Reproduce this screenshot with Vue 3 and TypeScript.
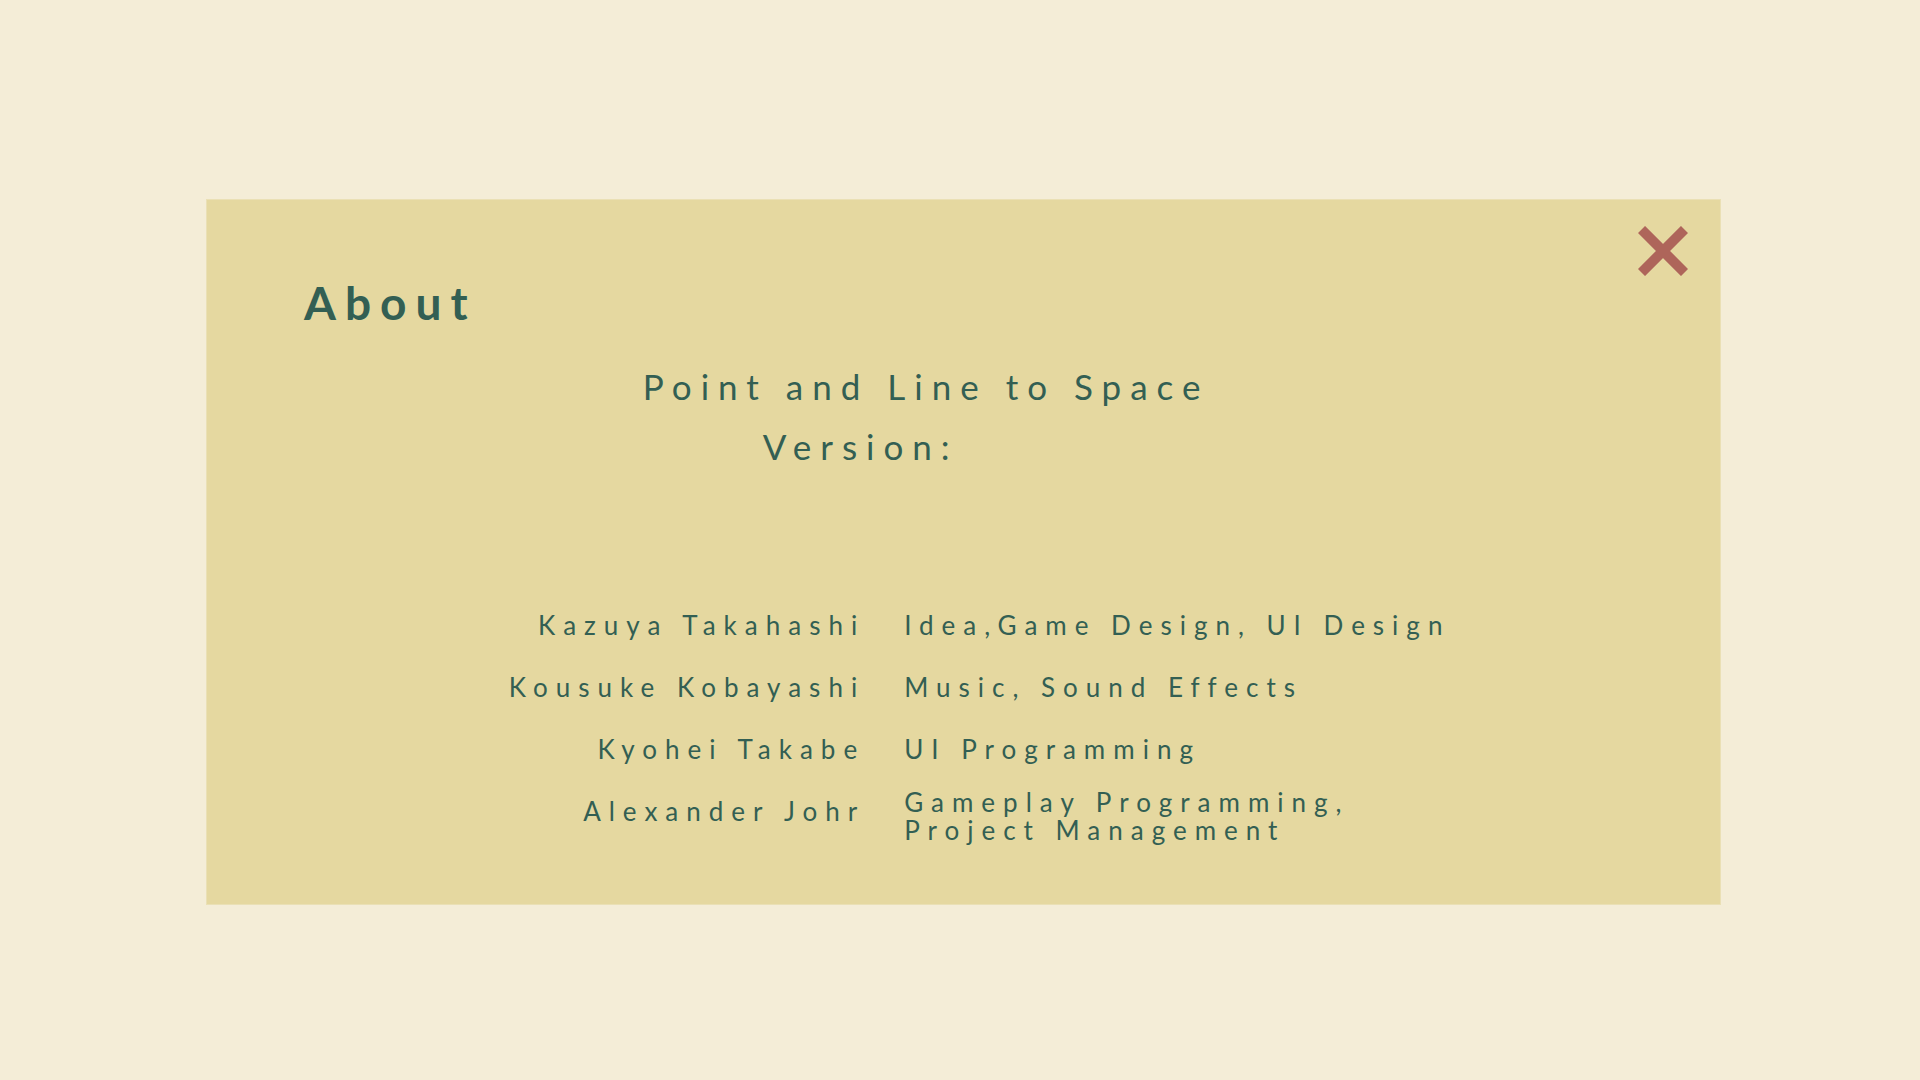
<script setup lang="ts">
import { ref } from 'vue'

interface Credit {
  name: string
  roles: string[]
}

const open = ref(true)

const credits: Credit[] = [
  { name: 'Kazuya Takahashi', roles: ['Idea,Game Design, UI Design'] },
  { name: 'Kousuke Kobayashi', roles: ['Music, Sound Effects'] },
  { name: 'Kyohei Takabe', roles: ['UI Programming'] },
  { name: 'Alexander Johr', roles: ['Gameplay Programming,', 'Project Management'] },
]
</script>

<template>
  <main class="page">
    <section v-if="open" class="panel" aria-labelledby="about-title">
      <header class="header">
        <h1 id="about-title" class="title">About</h1>
        <button class="close" type="button" aria-label="Close" @click="open = false">
          <svg viewBox="0 0 50 50" aria-hidden="true">
            <path d="M3.5 3.5 46.5 46.5M46.5 3.5 3.5 46.5" />
          </svg>
        </button>
      </header>

      <div class="product">
        <p class="product-name">Point and Line to Space</p>
        <p class="product-version">Version:</p>
      </div>

      <table class="credits">
        <tbody>
          <tr v-for="credit in credits" :key="credit.name">
            <th scope="row" class="name">{{ credit.name }}</th>
            <td class="roles" :class="{ multiline: credit.roles.length > 1 }">{{ credit.roles.join('\n') }}</td>
          </tr>
        </tbody>
      </table>
    </section>
  </main>
</template>

<style>
body {
  background: #f4edd7;
}
</style>

<style scoped>
.page {
  box-sizing: border-box;
  min-height: 100vh;
  padding: 199px 199px 100px 206px;
  background: #f4edd7;
  color: #335f53;
  font-family: Lato, "Open Sans", sans-serif;
}

.panel {
  padding-bottom: 60px;
  border: 1px solid #eae0b5;
  background: #e5d8a0;
}

.header {
  display: flex;
  justify-content: space-between;
  align-items: flex-start;
  padding: 0 32px 0 97px;
}

.title {
  margin: 75px 0 0;
  font-size: 46px;
  line-height: 56px;
  font-weight: 700;
  letter-spacing: 9px;
}

.close {
  width: 50px;
  height: 50px;
  margin-top: 26px;
  padding: 0;
  border: 0;
  background: none;
  cursor: pointer;
}

.close svg {
  display: block;
  width: 100%;
  height: 100%;
}

.close path {
  stroke: #ae655a;
  stroke-width: 10;
  fill: none;
}

.product {
  margin: 25px 0 118px;
  padding-left: 28.8%;
  font-size: 35px;
  line-height: 60px;
  letter-spacing: 9px;
}

.product p {
  margin: 0;
}

.product .product-version {
  margin-left: 120px;
}

.credits {
  width: 100%;
  table-layout: fixed;
  border-collapse: collapse;
  font-size: 26px;
  line-height: 28px;
  letter-spacing: 8px;
}

.name,
.roles {
  box-sizing: border-box;
  height: 62px;
  padding: 17px 0 0;
  vertical-align: top;
}

.name {
  width: 43.5%;
  font-weight: 400;
  text-align: right;
}

.roles {
  padding-left: 39px;
  text-align: left;
  white-space: pre;
}

.roles.multiline {
  padding-top: 8px;
}
</style>
